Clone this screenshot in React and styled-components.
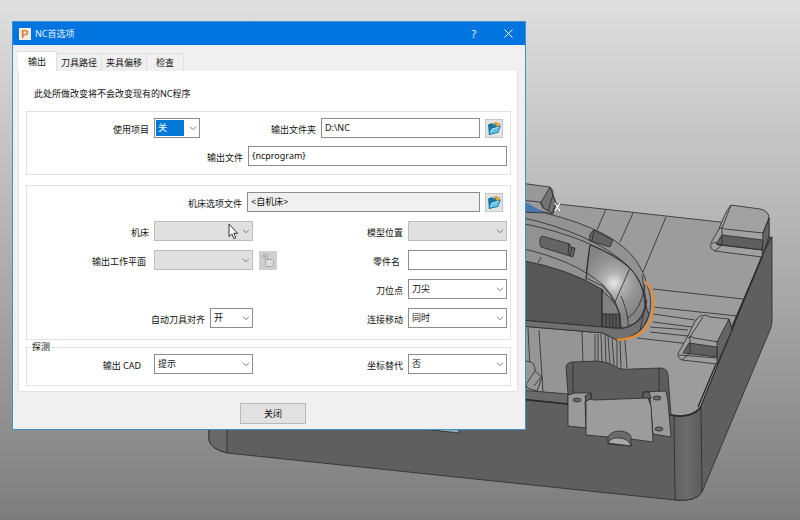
import React, { useState } from "react";
import styled, { createGlobalStyle, css } from "styled-components";

const tabs = ["输出", "刀具路径", "夹具偏移", "检查"];

const App = () => {
  const [tab, setTab] = useState("输出");

  return (
    <Desktop>
      <GlobalStyle />
      <Model />
      <Dialog role="dialog" aria-label="NC首选项">
        <TitleBar>
          <Logo>P</Logo>
          <Title>NC首选项</Title>
          <TitleButton>?</TitleButton>
          <TitleButton aria-label="close">
            <svg width="9" height="9" viewBox="0 0 9 9">
              <path d="M0.5 0.5L8.5 8.5M8.5 0.5L0.5 8.5" stroke="#e8f2fc" />
            </svg>
          </TitleButton>
        </TitleBar>

        <Tabs role="tablist">
          {tabs.map((name) => (
            <Tab
              key={name}
              role="tab"
              aria-selected={tab === name}
              $active={tab === name}
              onClick={() => setTab(name)}
            >
              {name}
            </Tab>
          ))}
        </Tabs>

        <Panel>
          <Note>此处所做改变将不会改变现有的NC程序</Note>

          <Group>
            <Row>
              <Cell $size="short">
                <Label htmlFor="project">使用项目</Label>
                <Select id="project" size="small" value="关" selected />
              </Cell>
              <Cell $inset>
                <Label htmlFor="folder">输出文件夹</Label>
                <Input id="folder" $size="medium" defaultValue="D:\NC" />
                <FolderButton />
              </Cell>
            </Row>
            <Row>
              <Cell>
                <Label htmlFor="file">输出文件</Label>
                <Input id="file" $size="full" defaultValue="{ncprogram}" />
              </Cell>
            </Row>
          </Group>

          <Group $tall>
            <Row>
              <Cell $inset>
                <Label htmlFor="option">机床选项文件</Label>
                <Input id="option" $size="large" defaultValue="<自机床>" readOnly />
                <FolderButton />
              </Cell>
            </Row>
            <Row>
              <Cell $size="left">
                <Label htmlFor="machine">机床</Label>
                <Select id="machine" disabled />
              </Cell>
              <Cell>
                <Label htmlFor="location">模型位置</Label>
                <Select id="location" disabled />
              </Cell>
            </Row>
            <Row>
              <Cell $size="left">
                <Label htmlFor="plane" $end="3px">
                  输出工作平面
                </Label>
                <Select id="plane" disabled />
              </Cell>
              <LockButton />
              <Cell>
                <Label htmlFor="part" $end="3px">
                  零件名
                </Label>
                <Input id="part" />
              </Cell>
            </Row>
            <Row>
              <Cell>
                <Label htmlFor="point">刀位点</Label>
                <Select id="point" value="刀尖" />
              </Cell>
            </Row>
            <Row>
              <Cell $size="left">
                <Label htmlFor="align">自动刀具对齐</Label>
                <Select id="align" size="tiny" value="开" />
              </Cell>
              <Cell>
                <Label htmlFor="move">连接移动</Label>
                <Select id="move" value="同时" />
              </Cell>
            </Row>
          </Group>

          <Probing>
            <legend>探测</legend>
            <Row>
              <Cell $size="left">
                <Label htmlFor="cad" $end="8px">
                  输出 CAD
                </Label>
                <Select id="cad" value="提示" />
              </Cell>
              <Cell>
                <Label htmlFor="coord">坐标替代</Label>
                <Select id="coord" value="否" />
              </Cell>
            </Row>
          </Probing>
        </Panel>

        <Footer>
          <CloseButton>关闭</CloseButton>
        </Footer>
      </Dialog>

      <Cursor width="12" height="18" viewBox="0 0 12 18">
        <path
          d="M1 1V13.5L3.8 11L5.8 15.6L7.8 14.8L5.8 10.3H9.6Z"
          fill="#fff"
          stroke="#333"
        />
      </Cursor>
    </Desktop>
  );
};

const Select = ({ id, size, value = "", disabled, selected }) => (
  <SelectBox $size={size}>
    <select
      id={id}
      defaultValue={value}
      disabled={disabled}
      className={selected ? "selected" : undefined}
    >
      <option>{value}</option>
    </select>
    <svg width="8" height="5" viewBox="0 0 8 5">
      <path d="M1 0.7L4 3.7L7 0.7" fill="none" stroke="#777" />
    </svg>
  </SelectBox>
);

const FolderButton = () => (
  <IconButton aria-label="folder">
    <svg width="14" height="15" viewBox="0 0 14 15">
      <path d="M1 3.5L5 2L6.5 3.5L11 2.5V11L2 14Z" fill="#1677a8" />
      <path d="M2 13.5L4 7.5L13.4 4.8L11 11.5Z" fill="#5cc3ea" stroke="#176b98" strokeWidth="0.8" />
      <path d="M3.6 11.5L5 8.3L11.6 6.2" fill="none" stroke="#b3e9fb" />
      <path d="M6.5 2.5C8.5 0.5 10.5 1.2 11 2.6L12.8 2.4L11.3 6L8 4L9.4 3.4C8.8 2.6 7.8 2.4 6.5 2.5Z" fill="#e9ad35" stroke="#a87822" strokeWidth="0.4" />
    </svg>
  </IconButton>
);

const LockButton = () => (
  <IconButton aria-label="lock" disabled>
    <svg width="14" height="16" viewBox="0 0 14 16" fill="none" stroke="#a8a8a8">
      <path d="M6.5 8V5.5C6.5 1 1.5 1 1.5 4.5V5.5H3.5V4.5C3.5 3.5 4.8 3.5 4.8 4.7V8" />
      <rect x="4.5" y="7.5" width="8" height="7" rx="1" fill="#dedede" />
    </svg>
  </IconButton>
);

// machined part shown in the viewport behind the dialog
const Model = () => (
  <Viewport viewBox="0 0 800 520" preserveAspectRatio="xMidYMid slice">
    <defs>
      <radialGradient id="shine" gradientUnits="userSpaceOnUse" cx="614" cy="283" r="36">
        <stop offset="0" stopColor="#e8e8e8" />
        <stop offset="0.3" stopColor="#b0b0b0" />
        <stop offset="0.65" stopColor="#929292" />
        <stop offset="1" stopColor="#848484" />
      </radialGradient>
      <linearGradient id="corner">
        <stop offset="0" stopColor="#616161" />
        <stop offset="0.5" stopColor="#6b6b6b" />
        <stop offset="1" stopColor="#5b5b5b" />
      </linearGradient>
    </defs>
    <g stroke="#2a2a2a" strokeWidth="0.8" strokeLinejoin="round">
      {/* body */}
      <path d="M209 300V440Q211 449 227 453L675 500Q696 502 702 492L770 330Q772 326 772 321V237L527 300Z" fill="#5f5f5f" />
      <path d="M209 400V440Q211 449 227 453V400Z" fill="#686868" />
      <path d="M674 415L675 500Q696 502 702 492L701 408Q692 418 674 416Z" fill="url(#corner)" />
      <path d="M423 429L459 433V427Z" fill="#8fa9ba" />

      {/* top face */}
      <path d="M520 200L558 204L720 222L770 237L762 257L700 408Q692 418 671 415L527 400H515Z" fill="#9c9c9c" />
      <path d="M772 237L763 253L732 330L700 408" fill="none" />
      <path d="M762 257L722 350L698 407" fill="none" strokeWidth="1.4" />
      <path
        d="M606 209L597 230M633 213L620 242M666 217L643 272M653 289L743 299M653 307L737 316M653 314L695 320M653 322L692 327M650 327L688 330M637 338L717 347M650 332L688 336"
        fill="none"
      />

      {/* upper right boss */}
      <path d="M731 205L760 209Q769 211 769 218V236L762 257L715 251Q708 248 712 241L719 229Q725 212 731 205Z" fill="#a1a1a1" />
      <path d="M763 233L769 218V236L762 257Z" fill="#656565" />
      <path d="M722 235L763 240L762 250L716 244Z" fill="#5f5f5f" />
      <path d="M719 229Q722 226 725 229L763 233L769 218M731 205L722 228V245L715 251M712 244Q715 240 718 245L763 250" fill="none" />

      {/* lower right boss */}
      <path d="M700 316Q706 314 710 317L729 319L732 330L717 364L682 360Q675 357 680 350L689 334Q695 319 700 316Z" fill="#9e9e9e" />
      <path d="M729 319L732 330L717 364V342Z" fill="#656565" />
      <path d="M689 343L717 347V357L683 353Z" fill="#5f5f5f" />
      <path d="M688 338Q691 335 694 338L718 342M703 317L690 337V353L682 360M679 355L717 358" fill="none" />

      {/* upper left boss */}
      <path d="M520 183L550 187Q554 190 553 195L556 203L553 214L520 206Z" fill="#999" />
      <path d="M550 187L541 202L543 208L552 213L556 203Z" fill="#737373" />
      <path d="M520 200L540 202L543 208M553 195L548 211" fill="none" />
      <path d="M520 201L527 203L545 213L527 216H520Z" fill="#4a76ad" stroke="none" />

      {/* wall under the arch */}
      <path d="M520 325L603 331L625 340V368L607 363L572 362L567 366L568 394L520 390Z" fill="#959595" stroke="none" />
      <path d="M528 328L531 388M539 330L543 392M582 332L583 362M595 334V361M598 334V362M601 334L602 362M605 334L606 363M608 336L610 364M612 338L614 366M617 339V367M620 340L621 368M625 340L627 368" fill="none" />
      <path d="M520 360L531 362Q535 364 535 371L542 377L537 391L527 388Z" fill="#969696" />
      <path d="M527 383L535 371M534 386L541 377" fill="none" />
      <path d="M520 390L568 394V404L520 399Z" fill="#6a6a6a" />
      <path d="M520 399L568 404M671 415Q691 419 701 407" fill="none" strokeWidth="1.6" />

      {/* arch */}
      <path d="M520 212L545 213Q617 231 637 262Q645 275 646 282Q655 302 647 321Q639 338 617 340L603 333L520 326Z" fill="#929292" />
      <path d="M590 245Q617 255 630 268Q644 282 646 305Q644 326 621 328Q620 304 603 286L586 278Q587 260 590 245Z" fill="url(#shine)" />
      <path d="M520 260Q570 269 603 290L602 327L520 320Z" fill="#575757" />
      <path d="M602 291Q617 302 620 315L602 314Z" fill="#818181" />
      <path d="M602 314H620V328L602 327Z" fill="#555" />
      <path d="M606 314V327M610 314V327M613 315V327M616 315V327" fill="none" />
      <path d="M520 320L602 327L622 329Q639 326 646 306L649 315Q642 338 617 340L603 333L520 326Z" fill="#707070" />
      <path
        d="M520 217Q592 233 627 265Q644 281 645 305M520 223Q592 237 630 268M520 248Q574 260 603 285Q620 301 621 328M541 257L538 263M590 245L586 280M630 268L615 302M621 296Q629 315 628 326M645 285Q641 310 628 318M647 300Q645 323 628 326M642 275L646 300L640 331M602 290V327"
        fill="none"
      />
      <path d="M542 236L570 244V247L575 248L573 257L541 247Q538 239 542 236Z" fill="#646464" />
      <path d="M594 230L613 240L610 247L590 241Q588 234 594 230Z" fill="#626262" />
      <path d="M594 230L592 241M569 244L568 255M572 247L570 256" fill="none" />

      {/* pocket and bracket */}
      <path d="M568 394L566 367Q567 362 573 362L598 361Q609 362 616 367Q621 370 632 369L661 368Q668 369 668 375L671 415L652 410L648 399L586 401Z" fill="#5d5d5d" />
      <path d="M573 362V393M659 368V392" fill="none" />
      <path d="M568 395L575 393H591V399L585 401L586 428L568 426Z" fill="#9a9a9a" />
      <path d="M585 396L591 393V399L586 401Z" fill="#606060" />
      <path d="M643 392L666 391L668 402L671 437L653 434L650 398L643 399Z" fill="#9a9a9a" />
      <path d="M643 392H649L651 398L643 399Z" fill="#606060" />
      <path d="M586 401Q590 398 595 400L648 398L651 406L653 442L631 439L586 435Z" fill="#9c9c9c" />
      <path d="M608 437Q611 431 620 431Q630 432 631 437V446L608 444Z" fill="#6b6b6b" />
      <path d="M608 443Q611 437 620 438Q629 439 631 446Z" fill="#aaa" />
      <g fill="#686868">
        <ellipse cx="577" cy="400" rx="4" ry="2" />
        <ellipse cx="657" cy="398" rx="4" ry="2" />
        <ellipse cx="659" cy="429" rx="4" ry="2" />
      </g>
    </g>
    <path d="M645 281Q656 294 653 311Q649 338 617 340" fill="none" stroke="#f58a1f" strokeWidth="1.8" />
    <path d="M555 203L560 211M560 203L555 211" stroke="#fff" strokeWidth="1.2" />
  </Viewport>
);

export default App;

const GlobalStyle = createGlobalStyle`
  * {
    box-sizing: border-box;
  }
  body {
    margin: 0;
  }
  body, button, input, select {
    font-family: "Noto Sans", "Noto Sans CJK SC", sans-serif;
    font-size: 9px;
    color: #111;
  }
`;

const widths = {
  tiny: "43px",
  small: "46px",
  medium: "159px",
  large: "233px",
  full: "259px",
};

const Desktop = styled.div`
  position: relative;
  min-height: 100vh;
  padding: 21px 12px;
  overflow: hidden;
  background: linear-gradient(#dfdfdf, #7d7d7d);
`;

const Viewport = styled.svg`
  position: absolute;
  inset: 0;
  width: 100%;
  height: 100%;
`;

const Dialog = styled.div`
  position: relative;
  width: 514px;
  max-width: 100%;
  border: 1px solid #3d91cf;
  background: #f0f0f0;
`;

const TitleBar = styled.div`
  display: flex;
  align-items: center;
  height: 23px;
  padding-left: 6px;
  background: #0074df;
`;

const Logo = styled.span`
  width: 12px;
  height: 12px;
  margin-right: 4px;
  background: #f8eadd;
  color: #dd7a33;
  font: bold 11px/12px "Liberation Sans", sans-serif;
  text-align: center;
`;

const Title = styled.span`
  flex: 1;
  color: #e8f2fc;
`;

const TitleButton = styled.button`
  display: flex;
  align-items: center;
  justify-content: center;
  width: 34px;
  height: 22px;
  padding: 0;
  border: none;
  background: none;
  color: #e8f2fc;
  font-size: 11px;
`;

const Tabs = styled.div`
  display: flex;
  align-items: flex-end;
  height: 26px;
  padding-left: 5px;
`;

const Tab = styled.button`
  height: 18px;
  padding: 0 4px;
  border: 1px solid #e0e0e0;
  border-width: 1px 1px 0 0;
  background: #f0f0f0;

  &:last-child {
    padding: 0 9px;
  }
  ${({ $active }) =>
    $active &&
    css`
      height: 20px;
      padding: 0 10px;
      background: #fff;
    `}
`;

const Panel = styled.div`
  margin: 0 7px 0 5px;
  padding: 0 6px 5px 7px;
  border: 1px solid #e3e3e3;
  border-top: none;
  background: #fff;
`;

const Note = styled.p`
  margin: 0;
  padding: 16px 8px 10px;
  line-height: 14px;
`;

const Group = styled.div`
  display: flex;
  flex-direction: column;
  gap: 8px;
  margin-bottom: 10px;
  padding: 6px 3px 8px 0;
  border: 1px solid #e2e2e2;

  ${({ $tall }) =>
    $tall &&
    css`
      gap: 9px;
      margin-bottom: 2px;
      padding-bottom: 11px;
    `}
`;

const Probing = styled.fieldset`
  margin: 0;
  padding: 2px 3px 11px 0;
  border: 1px solid #e2e2e2;

  legend {
    margin-left: 4px;
    padding: 0 1px;
    line-height: 10px;
  }
`;

const Row = styled.div`
  display: flex;
  align-items: center;
  height: 20px;
`;

const cells = { short: "173px", left: "226px" };

const Cell = styled.div`
  display: flex;
  align-items: center;
  justify-content: flex-end;
  gap: 5px;
  flex: ${({ $size }) => ($size ? `0 0 ${cells[$size]}` : 1)};
  padding-right: ${({ $inset }) => ($inset ? "4px" : 0)};

  & + button {
    margin-left: 6px;
  }
`;

const Label = styled.label`
  padding-top: 2px;
  padding-right: ${({ $end }) => $end || 0};
  white-space: nowrap;
`;

const Input = styled.input`
  width: ${({ $size }) => widths[$size] || "99px"};
  height: 20px;
  padding: 0 3px 2px;
  border: 1px solid #8c8c8c;
  background: #fff;

  &:read-only {
    background: #f0f0f0;
  }
`;

const SelectBox = styled.span`
  position: relative;
  display: flex;
  width: ${({ $size }) => widths[$size] || "99px"};
  height: 20px;

  select {
    appearance: none;
    width: 100%;
    padding: 0 3px 2px;
    border: 1px solid #8c8c8c;
    border-radius: 0;
    background: #fff;
  }
  select:disabled {
    border-color: #bdbdbd;
    background: #e0e0e0;
    opacity: 1;
  }
  .selected {
    background: #fff linear-gradient(#0078d7, #0078d7) 1px 1px / 28px 16px
      no-repeat;
    color: #fff;
  }
  svg {
    position: absolute;
    top: 8px;
    right: 3px;
    pointer-events: none;
  }
`;

const IconButton = styled.button`
  display: flex;
  align-items: center;
  justify-content: center;
  width: 18px;
  height: 19px;
  padding: 0;
  border: 1px solid #c6c6c6;
  background: #e3e3e3;

  &:disabled {
    border-color: #cfcfcf;
    background: #cfcfcf;
  }
`;

const Footer = styled.div`
  display: flex;
  justify-content: center;
  padding: 11px 0 5px 8px;
`;

const CloseButton = styled.button`
  width: 66px;
  height: 21px;
  padding: 0;
  border: 1px solid #b9b9b9;
  background: #e1e1e1;
`;

const Cursor = styled.svg`
  position: absolute;
  top: 223px;
  left: 228px;
`;
